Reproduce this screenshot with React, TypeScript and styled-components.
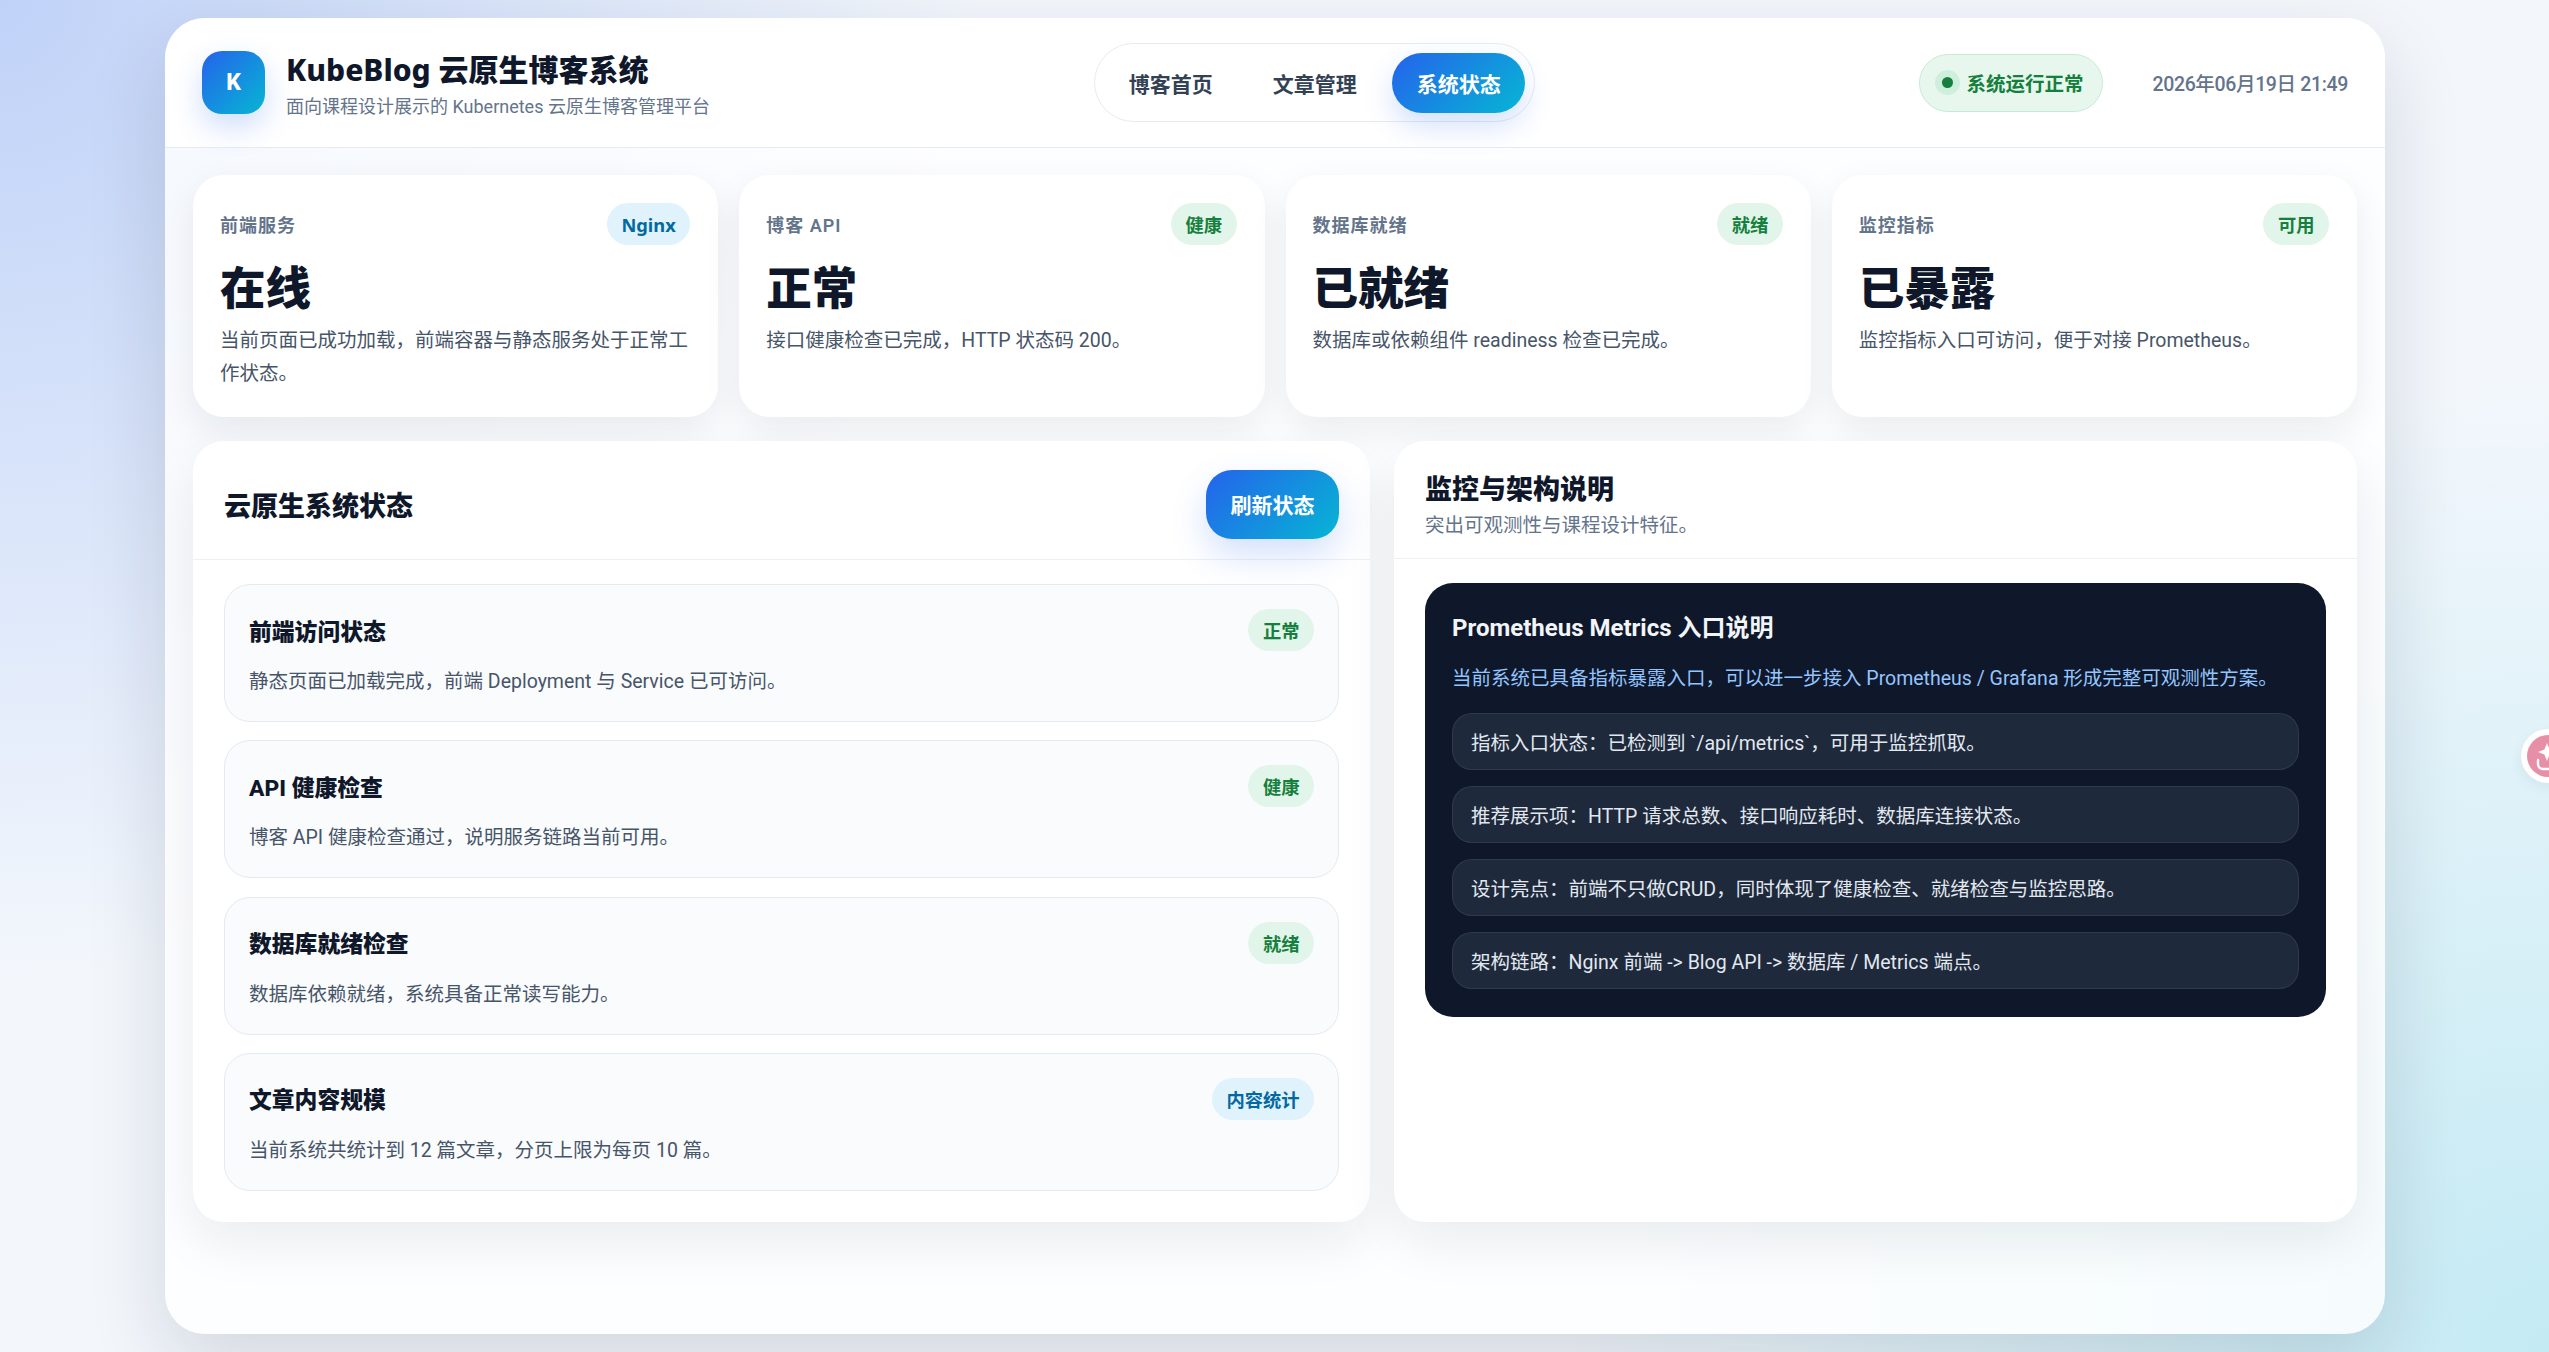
import React from "react";
import styled, { createGlobalStyle } from "styled-components";

const GlobalStyle = createGlobalStyle`
  * {
    box-sizing: border-box;
  }
  html, body {
    margin: 0;
    height: 100%;
    overflow: hidden;
  }
  body {
    font-family: Roboto, "Noto Sans CJK SC", sans-serif;
    color: #0f172a;
    background:
      radial-gradient(circle at 0% 0%, rgba(37, 99, 235, 0.25), transparent 34%),
      radial-gradient(circle at 100% 100%, rgba(6, 182, 212, 0.2), transparent 34%),
      #f3f7fc;
  }
`;

const Page = styled.div`
  height: 100vh;
  padding: 18px 164px 18px 165px;
`;

const Shell = styled.div`
  height: 100%;
  border-radius: 40px;
  background: rgba(255, 255, 255, 0.82);
  box-shadow: 0 30px 80px rgba(15, 23, 42, 0.14);
  overflow: hidden;
`;

const Header = styled.header`
  height: 130px;
  padding: 0 37px;
  display: flex;
  align-items: center;
  justify-content: space-between;
  background: rgba(255, 255, 255, 0.92);
  border-bottom: 1.6px solid #e6ebf2;
`;

const Brand = styled.div`
  display: flex;
  align-items: center;
  gap: 21px;
`;

const Logo = styled.div`
  width: 63px;
  height: 63px;
  border-radius: 20px;
  display: flex;
  align-items: center;
  justify-content: center;
  color: #fff;
  font-size: 23px;
  font-weight: 800;
  background: linear-gradient(135deg, #2563eb, #06b6d4);
  box-shadow: 0 13px 30px rgba(37, 99, 235, 0.22);
`;

const BrandText = styled.div`
  padding-top: 6px;
`;

const BrandTitle = styled.div`
  font-family: "Noto Sans", "Noto Sans CJK SC", sans-serif;
  font-size: 30px;
  line-height: 38px;
  font-weight: 800;
  color: #0f172a;
`;

const BrandSub = styled.div`
  margin-top: 4px;
  font-size: 18px;
  line-height: 28px;
  color: #64748b;
`;

const Nav = styled.nav`
  height: 79px;
  padding: 0 9px;
  display: flex;
  align-items: center;
  gap: 11px;
  border: 1.6px solid #e6ebf2;
  border-radius: 40px;
  background: #fff;
`;

const NavItem = styled.a<{ $active?: boolean }>`
  width: 133px;
  height: 60px;
  border-radius: 30px;
  display: flex;
  align-items: center;
  justify-content: center;
  font-size: 21px;
  font-weight: 700;
  color: ${(p) => (p.$active ? "#fff" : "#334155")};
  background: ${(p) => (p.$active ? "linear-gradient(135deg, #2563eb, #06b6d4)" : "transparent")};
  box-shadow: ${(p) => (p.$active ? "0 13px 30px rgba(37, 99, 235, 0.2)" : "none")};
`;

const HeaderRight = styled.div`
  display: flex;
  align-items: center;
  justify-content: flex-end;
  gap: 49px;
`;

const SystemPill = styled.div`
  width: 184px;
  height: 58px;
  padding-left: 15px;
  border: 1.6px solid #c4ecd3;
  border-radius: 29px;
  background: #e7f7ed;
  display: flex;
  align-items: center;
  gap: 8px;
  font-size: 19.5px;
  font-weight: 700;
  color: #15803d;
`;

const Dot = styled.span`
  width: 11px;
  height: 11px;
  margin: 0 5px 0 7px;
  border-radius: 50%;
  background: #15803d;
  box-shadow: 0 0 0 7px #cdefdb;
`;

const DateText = styled.div`
  font-size: 19.5px;
  letter-spacing: -0.35px;
  font-weight: 500;
  color: #64748b;
`;

const Content = styled.main`
  padding: 27px 28px 0;
`;

const StatGrid = styled.section`
  display: grid;
  grid-template-columns: repeat(4, 1fr);
  gap: 21px;
`;

const StatCard = styled.div`
  height: 242px;
  padding: 28px 28px 27px 27px;
  border-radius: 31px;
  background: #fff;
  box-shadow: 0 13px 36px rgba(15, 23, 42, 0.08);
`;

const StatTop = styled.div`
  display: flex;
  align-items: center;
  justify-content: space-between;
`;

const StatLabel = styled.div`
  font-size: 18px;
  letter-spacing: 1px;
  font-weight: 600;
  color: #64748b;
`;

const Badge = styled.span<{ $tone: "green" | "blue" }>`
  height: 42px;
  padding: 0 14.5px;
  border-radius: 21px;
  display: inline-flex;
  align-items: center;
  flex-shrink: 0;
  font-family: "Noto Sans", "Noto Sans CJK SC", sans-serif;
  font-size: 18.3px;
  font-weight: 700;
  color: ${(p) => (p.$tone === "green" ? "#15803d" : "#0369a1")};
  background: ${(p) => (p.$tone === "green" ? "#e2f5ea" : "#e0f2fc")};
`;

const StatValue = styled.div`
  margin-top: 17px;
  font-size: 45.5px;
  line-height: 55px;
  font-weight: 800;
  color: #0f172a;
`;

const StatDesc = styled.div`
  margin-top: 7px;
  font-size: 19.5px;
  line-height: 33px;
  color: #475569;
`;

const PanelGrid = styled.section`
  margin-top: 24px;
  display: grid;
  grid-template-columns: 1177px 963px;
  gap: 24px;
`;

const Panel = styled.div`
  border-radius: 31px;
  background: #fff;
  box-shadow: 0 20px 52px rgba(15, 23, 42, 0.08);
`;

const PanelHead = styled.div`
  height: 119px;
  padding: 8px 31px 0;
  display: flex;
  align-items: center;
  justify-content: space-between;
  border-bottom: 1.6px solid #edf1f6;
`;

const PanelHeadStack = styled.div`
  height: 118px;
  padding: 30px 31px 0;
  border-bottom: 1.6px solid #edf1f6;
`;

const PanelTitle = styled.h2<{ $nudge?: boolean }>`
  margin: ${(p) => (p.$nudge ? "6px 0 0" : "0")};
  font-size: 27px;
  line-height: 38px;
  font-weight: 800;
  color: #0f172a;
`;

const PanelSub = styled.div`
  font-size: 19.5px;
  line-height: 33px;
  color: #64748b;
`;

const RefreshButton = styled.button`
  width: 133px;
  height: 69px;
  border: 0;
  border-radius: 26px;
  font-family: inherit;
  font-size: 21px;
  font-weight: 700;
  color: #fff;
  background: linear-gradient(135deg, #2563eb, #06b6d4);
  box-shadow: 0 16px 36px rgba(37, 99, 235, 0.2);
`;

const PanelBody = styled.div`
  padding: 24px 31px 31px;
`;

const CheckList = styled.div`
  display: flex;
  flex-direction: column;
  gap: 18.3px;
`;

const CheckItem = styled.div`
  height: 138px;
  padding: 24px 24px 0;
  border: 1.6px solid #e4eaf2;
  border-radius: 26px;
  background: #fafbfd;
`;

const CheckTop = styled.div`
  display: flex;
  align-items: center;
  justify-content: space-between;
`;

const CheckTitle = styled.div`
  font-size: 22.8px;
  font-weight: 800;
  color: #0f172a;
`;

const CheckDesc = styled.div`
  margin-top: 14px;
  font-size: 19.5px;
  line-height: 33px;
  color: #475569;
`;

const DarkCard = styled.div`
  padding: 28px 27px;
  border-radius: 28px;
  background: #0f172a;
`;

const DarkTitle = styled.div`
  font-size: 24px;
  line-height: 34px;
  font-weight: 700;
  color: #f1f5f9;
`;

const DarkSub = styled.div`
  margin: 17px 0 18px;
  font-size: 19.5px;
  line-height: 33px;
  color: #93c5fd;
`;

const DarkList = styled.div`
  display: flex;
  flex-direction: column;
  gap: 16px;
`;

const DarkItem = styled.div`
  height: 57px;
  padding: 0 18px;
  display: flex;
  align-items: center;
  border: 1.6px solid rgba(148, 163, 184, 0.14);
  border-radius: 20px;
  background: #1e293b;
  font-size: 19.5px;
  color: #e2e8f0;
`;

const FloatBall = styled.div`
  position: fixed;
  top: 729px;
  right: -26px;
  width: 54px;
  height: 54px;
  padding: 6px;
  border-radius: 50%;
  background: #fff;
  box-shadow: 0 4px 14px rgba(15, 23, 42, 0.06);
`;

const stats = [
  { label: "前端服务", badge: "Nginx", tone: "blue", value: "在线", desc: "当前页面已成功加载，前端容器与静态服务处于正常工作状态。" },
  { label: "博客 API", badge: "健康", tone: "green", value: "正常", desc: "接口健康检查已完成，HTTP 状态码 200。" },
  { label: "数据库就绪", badge: "就绪", tone: "green", value: "已就绪", desc: "数据库或依赖组件 readiness 检查已完成。" },
  { label: "监控指标", badge: "可用", tone: "green", value: "已暴露", desc: "监控指标入口可访问，便于对接 Prometheus。" },
] as const;

const checks = [
  { title: "前端访问状态", badge: "正常", tone: "green", desc: "静态页面已加载完成，前端 Deployment 与 Service 已可访问。" },
  { title: "API 健康检查", badge: "健康", tone: "green", desc: "博客 API 健康检查通过，说明服务链路当前可用。" },
  { title: "数据库就绪检查", badge: "就绪", tone: "green", desc: "数据库依赖就绪，系统具备正常读写能力。" },
  { title: "文章内容规模", badge: "内容统计", tone: "blue", desc: "当前系统共统计到 12 篇文章，分页上限为每页 10 篇。" },
] as const;

const notes = [
  "指标入口状态：已检测到 `/api/metrics`，可用于监控抓取。",
  "推荐展示项：HTTP 请求总数、接口响应耗时、数据库连接状态。",
  "设计亮点：前端不只做CRUD，同时体现了健康检查、就绪检查与监控思路。",
  "架构链路：Nginx 前端 -> Blog API -> 数据库 / Metrics 端点。",
];

export default function App() {
  return (
    <>
      <GlobalStyle />
      <Page>
        <Shell>
          <Header>
            <Brand>
              <Logo>K</Logo>
              <BrandText>
                <BrandTitle>KubeBlog 云原生博客系统</BrandTitle>
                <BrandSub>面向课程设计展示的 Kubernetes 云原生博客管理平台</BrandSub>
              </BrandText>
            </Brand>
            <Nav>
              <NavItem>博客首页</NavItem>
              <NavItem>文章管理</NavItem>
              <NavItem $active>系统状态</NavItem>
            </Nav>
            <HeaderRight>
              <SystemPill>
                <Dot />
                系统运行正常
              </SystemPill>
              <DateText>2026年06月19日 21:49</DateText>
            </HeaderRight>
          </Header>
          <Content>
            <StatGrid>
              {stats.map((s) => (
                <StatCard key={s.label}>
                  <StatTop>
                    <StatLabel>{s.label}</StatLabel>
                    <Badge $tone={s.tone}>{s.badge}</Badge>
                  </StatTop>
                  <StatValue>{s.value}</StatValue>
                  <StatDesc>{s.desc}</StatDesc>
                </StatCard>
              ))}
            </StatGrid>
            <PanelGrid>
              <Panel>
                <PanelHead>
                  <PanelTitle $nudge>云原生系统状态</PanelTitle>
                  <RefreshButton>刷新状态</RefreshButton>
                </PanelHead>
                <PanelBody>
                  <CheckList>
                    {checks.map((c) => (
                      <CheckItem key={c.title}>
                        <CheckTop>
                          <CheckTitle>{c.title}</CheckTitle>
                          <Badge $tone={c.tone}>{c.badge}</Badge>
                        </CheckTop>
                        <CheckDesc>{c.desc}</CheckDesc>
                      </CheckItem>
                    ))}
                  </CheckList>
                </PanelBody>
              </Panel>
              <Panel>
                <PanelHeadStack>
                  <PanelTitle>监控与架构说明</PanelTitle>
                  <PanelSub>突出可观测性与课程设计特征。</PanelSub>
                </PanelHeadStack>
                <PanelBody>
                  <DarkCard>
                    <DarkTitle>Prometheus Metrics 入口说明</DarkTitle>
                    <DarkSub>当前系统已具备指标暴露入口，可以进一步接入 Prometheus / Grafana 形成完整可观测性方案。</DarkSub>
                    <DarkList>
                      {notes.map((n) => (
                        <DarkItem key={n}>{n}</DarkItem>
                      ))}
                    </DarkList>
                  </DarkCard>
                </PanelBody>
              </Panel>
            </PanelGrid>
          </Content>
        </Shell>
      </Page>
      <FloatBall>
        <svg width="42" height="42" viewBox="0 0 42 42">
          <circle cx="21" cy="21" r="21" fill="#e88fa8" />
          <path d="M20 8 l2.6 6.4 L29 17 l-6.4 2.6 L20 26 l-2.6 -6.4 L11 17 l6.4 -2.6 Z" fill="#fff" />
          <path d="M11 25 v4 a5 5 0 0 0 5 5 h8" fill="none" stroke="#fff" strokeWidth="2.4" strokeLinecap="round" />
        </svg>
      </FloatBall>
    </>
  );
}
